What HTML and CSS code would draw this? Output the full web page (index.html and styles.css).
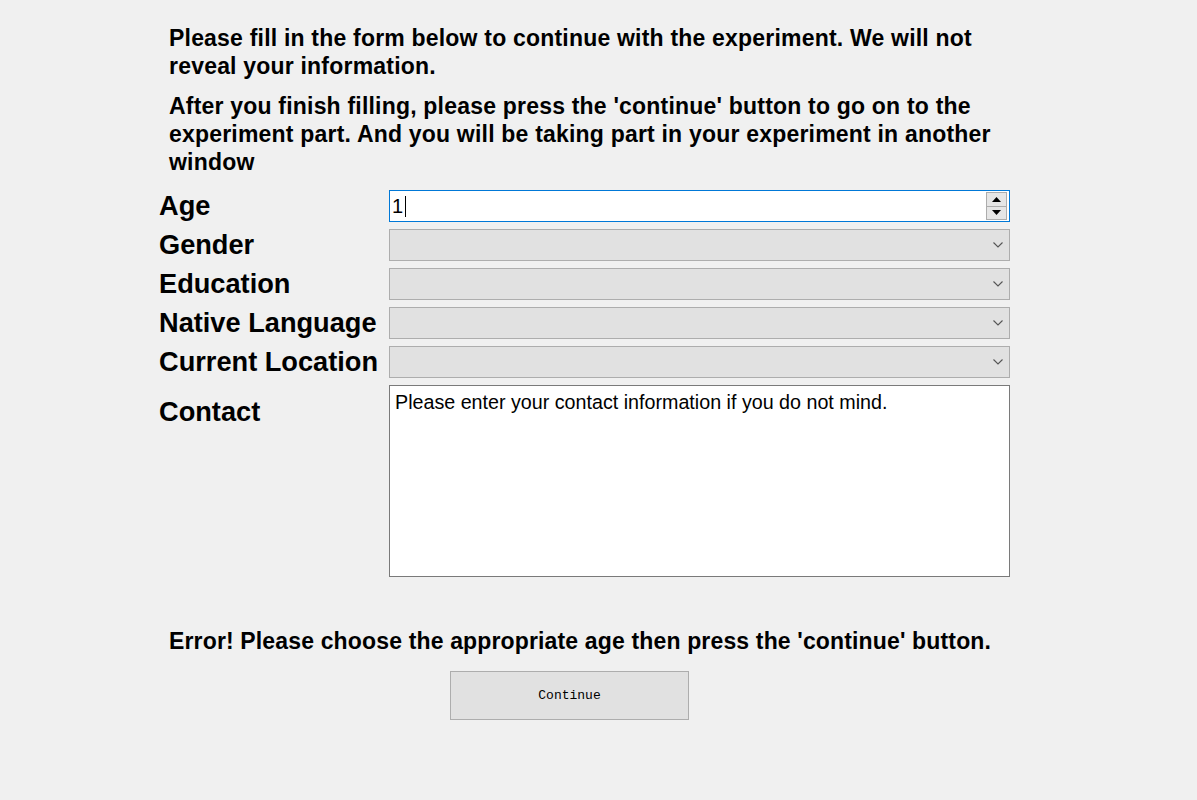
FILE: index.html
```html
<!DOCTYPE html>
<html>
<head>
<meta charset="utf-8">
<link rel="stylesheet" href="styles.css">
</head>
<body>
<div class="page">
  <div class="intro">
    <p>Please fill in the form below to continue with the experiment. We will not reveal your information.</p>
    <p>After you finish filling, please press the 'continue' button to go on to the experiment part. And you will be taking part in your experiment in another window</p>
  </div>
  <div class="form">
    <div class="label">Age</div>
    <div class="field spin">
      <span class="val">1</span><span class="caret"></span>
      <div class="spinbtns">
        <div class="sbtn"><svg width="9" height="5" viewBox="0 0 9 5"><path d="M4.5 0 L9 5 L0 5 Z" fill="#000"/></svg></div>
        <div class="sbtn"><svg width="9" height="5" viewBox="0 0 9 5"><path d="M0 0 L9 0 L4.5 5 Z" fill="#000"/></svg></div>
      </div>
    </div>
    <div class="label">Gender</div>
    <div class="field select"><svg class="chev" width="10" height="6" viewBox="0 0 10 6"><path d="M0.5 0.5 L5 5 L9.5 0.5" fill="none" stroke="#555" stroke-width="1.1"/></svg></div>
    <div class="label">Education</div>
    <div class="field select"><svg class="chev" width="10" height="6" viewBox="0 0 10 6"><path d="M0.5 0.5 L5 5 L9.5 0.5" fill="none" stroke="#555" stroke-width="1.1"/></svg></div>
    <div class="label">Native Language</div>
    <div class="field select"><svg class="chev" width="10" height="6" viewBox="0 0 10 6"><path d="M0.5 0.5 L5 5 L9.5 0.5" fill="none" stroke="#555" stroke-width="1.1"/></svg></div>
    <div class="label">Current Location</div>
    <div class="field select"><svg class="chev" width="10" height="6" viewBox="0 0 10 6"><path d="M0.5 0.5 L5 5 L9.5 0.5" fill="none" stroke="#555" stroke-width="1.1"/></svg></div>
    <div class="label contact-label">Contact</div>
    <div class="field textarea">Please enter your contact information if you do not mind.</div>
  </div>
  <p class="error">Error! Please choose the appropriate age then press the 'continue' button.</p>
  <div class="btnrow"><div class="button">Continue</div></div>
</div>
</body>
</html>
```
FILE: styles.css
```css
html, body {
  margin: 0;
  padding: 0;
  background: #f0f0f0;
}
body {
  font-family: "Liberation Sans", Arial, sans-serif;
  color: #000;
}
.page {
  width: 1197px;
  height: 800px;
  position: relative;
}
.intro {
  padding-top: 24px;
  margin-left: 169px;
  width: 840px;
}
.intro p {
  margin: 0 0 12px 0;
  font-size: 23px;
  letter-spacing: 0.2px;
  font-weight: bold;
  line-height: 28px;
}
.intro p:last-child {
  margin-bottom: 0;
}
.form {
  margin-left: 159px;
  margin-top: 14px;
  display: grid;
  grid-template-columns: 230px 621px;
  grid-auto-rows: 32px;
  row-gap: 7px;
}
.label {
  font-size: 27.2px;
  font-weight: bold;
  line-height: 32px;
  white-space: nowrap;
}
.field {
  box-sizing: border-box;
  position: relative;
}
.spin {
  background: #fff;
  border: 1px solid #0078d7;
  display: flex;
  align-items: center;
  padding-left: 2px;
}
.spin .val {
  font-size: 20px;
  line-height: 22px;
}
.spin .caret {
  display: inline-block;
  width: 1px;
  height: 21px;
  background: #000;
  margin-left: 2px;
}
.spinbtns {
  position: absolute;
  right: 2px;
  top: 1px;
  width: 21px;
  height: 28px;
  display: flex;
  flex-direction: column;
}
.sbtn {
  flex: 1;
  background: #e6e6e6;
  border: 1px solid #adadad;
  display: flex;
  align-items: center;
  justify-content: center;
}
.sbtn + .sbtn {
  border-top: none;
}
.select {
  background: #e1e1e1;
  border: 1px solid #adadad;
  display: flex;
  align-items: center;
  justify-content: flex-end;
  padding-right: 6px;
}
.chev {
  display: block;
}
.contact-label {
  padding-top: 11px;
}
.textarea {
  grid-row: span 5;
  height: 192px;
  background: #fff;
  border: 1px solid #7a7a7a;
  font-size: 19.7px;
  line-height: 22px;
  padding: 5px 5px;
}
.error {
  margin: 54px 0 0 169px;
  font-size: 23px;
  letter-spacing: 0.15px;
  font-weight: bold;
  line-height: 28px;
}
.btnrow {
  margin-top: 16px;
  padding-left: 450px;
}
.button {
  box-sizing: border-box;
  width: 239px;
  height: 49px;
  background: #e1e1e1;
  border: 1px solid #adadad;
  font-family: "Liberation Mono", "Courier New", monospace;
  font-size: 13px;
  display: flex;
  align-items: center;
  justify-content: center;
}
```
